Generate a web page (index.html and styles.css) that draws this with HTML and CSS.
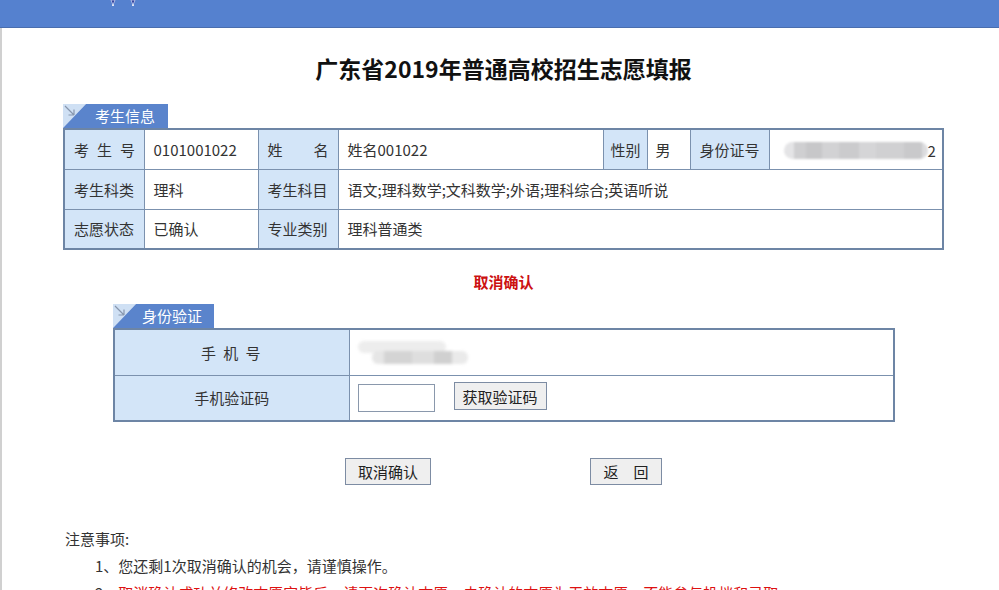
FILE: index.html
```html
<!DOCTYPE html>
<html lang="zh-CN">
<head>
<meta charset="utf-8">
<title>广东省2019年普通高校招生志愿填报</title>
<link rel="stylesheet" href="styles.css">
</head>
<body>
<header class="topbar">
  <svg class="logo-bits" width="34" height="7" viewBox="0 0 34 7">
    <path d="M4 0 L8 0 L6 5 Z" fill="#2a3a9a" stroke="#c8d0f0" stroke-width="0.8"/>
    <circle cx="6" cy="5.2" r="0.9" fill="#ffffff"/>
    <path d="M24 0 L28 0 L26 5 Z" fill="#2a3a9a" stroke="#c8d0f0" stroke-width="0.8"/>
    <circle cx="26" cy="5.2" r="0.9" fill="#ffffff"/>
  </svg>
</header>
<main class="page">
  <div class="content">
    <h1 class="title">广东省2019年普通高校招生志愿填报</h1>

    <div class="tab">
      <svg class="tab-corner" width="28" height="24" viewBox="0 0 28 24">
        <polygon points="0,0 23,0 0,24" fill="#cfe0f4"/>
        <polygon points="23,0 28,0 28,24 0,24" fill="#5a84cc"/>
        <path d="M2 2 L11 11 M11 11 L11 5.5 M11 11 L5.5 11" stroke="#8796ad" stroke-width="1.2" fill="none"/>
      </svg>
      <span class="tab-text tab-text-a">考生信息</span>
    </div>
    <table class="info">
      <colgroup>
        <col class="c1"><col class="c2"><col class="c3"><col class="c4"><col class="c5"><col class="c6"><col class="c7"><col class="c8">
      </colgroup>
      <tr>
        <td class="lbl"><span class="just">考 生 号</span></td>
        <td>0101001022</td>
        <td class="lbl"><span class="just">姓 名</span></td>
        <td>姓名001022</td>
        <td class="lbl lbl-sm">性别</td>
        <td class="val-sm">男</td>
        <td class="lbl">身份证号</td>
        <td class="idcell"><span class="blur-id"></span><span class="id-tail">2</span></td>
      </tr>
      <tr>
        <td class="lbl">考生科类</td>
        <td>理科</td>
        <td class="lbl">考生科目</td>
        <td colspan="5">语文;理科数学;文科数学;外语;理科综合;英语听说</td>
      </tr>
      <tr>
        <td class="lbl">志愿状态</td>
        <td>已确认</td>
        <td class="lbl">专业类别</td>
        <td colspan="5">理科普通类</td>
      </tr>
    </table>

    <p class="action-title">取消确认</p>

    <div class="verify">
      <div class="tab">
        <svg class="tab-corner" width="28" height="24" viewBox="0 0 28 24">
          <polygon points="0,0 23,0 0,24" fill="#cfe0f4"/>
          <polygon points="23,0 28,0 28,24 0,24" fill="#5a84cc"/>
          <path d="M2 2 L11 11 M11 11 L11 5.5 M11 11 L5.5 11" stroke="#8796ad" stroke-width="1.2" fill="none"/>
        </svg>
        <span class="tab-text tab-text-b">身份验证</span>
      </div>
      <table class="auth">
        <colgroup><col class="a1"><col class="a2"></colgroup>
        <tr>
          <td class="lbl center spaced">手 机 号</td>
          <td class="aval">
            <div class="blur-phone"><span class="bp1"></span><span class="bp2"></span></div>
          </td>
        </tr>
        <tr>
          <td class="lbl center">手机验证码</td>
          <td class="aval">
            <div class="code-row">
              <input class="code-input" type="text">
              <button class="btn btn-code" type="button">获取验证码</button>
            </div>
          </td>
        </tr>
      </table>
    </div>

    <div class="actions">
      <button class="btn btn-main" type="button">取消确认</button>
      <button class="btn btn-back" type="button">返　回</button>
    </div>
  </div>

  <section class="notes">
    <p class="notes-head">注意事项:</p>
    <p class="note">1、您还剩1次取消确认的机会，请谨慎操作。</p>
    <p class="note">2、<span class="red">取消确认成功并修改志愿完毕后，请再次确认志愿，未确认的志愿为无效志愿，不能参与投档和录取。</span></p>
  </section>
</main>
</body>
</html>
```
FILE: styles.css
```css
* { box-sizing: border-box; }
html, body { margin: 0; padding: 0; background: #ffffff; }
body {
  font-family: "Noto Sans CJK SC", "Microsoft YaHei", "Noto Sans", sans-serif;
  font-size: 15px;
  color: #333333;
  width: 999px;
  height: 590px;
  overflow: hidden;
}
.topbar {
  height: 28px;
  background: #5581cf;
  border-bottom: 1px solid #4a6eae;
  display: flex;
  align-items: flex-start;
  padding-left: 107px;
}
.logo-bits { display: block; }
.page {
  border-left: 2px solid #d0d0d0;
  min-height: 562px;
}
.content {
  width: 881px;
  margin-left: 61px;
  display: flex;
  flex-direction: column;
}
.title {
  margin: 24px 0 0 0;
  height: 32px;
  line-height: 32px;
  text-align: center;
  font-size: 23px;
  font-weight: bold;
  color: #111111;
}
.tab {
  margin-top: 20px;
  height: 24px;
  display: flex;
  align-items: stretch;
}
.tab-corner { display: block; flex: none; }
.tab-text {
  background: #5a84cc;
  color: #ffffff;
  font-size: 15px;
  line-height: 24px;
  height: 24px;
}
.tab-text-a { padding: 0 13px 0 4px; }
.tab-text-b { padding: 0 12px 0 1px; }

table { border-collapse: collapse; table-layout: fixed; }
td {
  border: 1px solid #7b91ae;
  padding: 0 0 0 9px;
  font-size: 15px;
  color: #333333;
  white-space: nowrap;
}
.info {
  width: 879px;
  border: 2px solid #6d85a5;
}
.info td { height: 40px; }
.c1 { width: 80px; } .c2 { width: 114px; } .c3 { width: 80px; } .c4 { width: 265px; }
.c5 { width: 44px; } .c6 { width: 43px; } .c7 { width: 79px; } .c8 { width: 174px; }
.lbl { background: #d3e5f8; }
.info .lbl { padding-left: 9px; }
.info .lbl-sm { padding-left: 7px; }
.info .val-sm { padding-left: 8px; }
.just {
  display: inline-block;
  width: 61px;
  text-align: justify;
  text-align-last: justify;
}
.idcell { padding-left: 14px; }
.blur-id {
  display: inline-block;
  vertical-align: middle;
  width: 144px;
  height: 17px;
  border-radius: 9px;
  background: linear-gradient(90deg, #e4e4e6 0, #e4e4e6 10px, #cfcfd1 10px, #cfcfd1 22px, #c7c7c9 22px, #c7c7c9 38px, #d2d2d4 38px, #d2d2d4 55px, #cbcbcd 55px, #cbcbcd 75px, #d5d5d7 75px, #d5d5d7 92px, #d0d0d2 92px, #d0d0d2 120px, #c9c9cb 120px, #c9c9cb 138px, #dcdcde 138px);
  filter: blur(1px);
}
.id-tail { vertical-align: middle; margin-left: 0; }

.action-title {
  margin: 21px 0 0 0;
  height: 22px;
  line-height: 22px;
  text-align: center;
  color: #cc1111;
  font-weight: bold;
  font-size: 15px;
}
.verify {
  width: 780px;
  margin-left: 50px;
  display: flex;
  flex-direction: column;
}
.verify .tab { margin-top: 11px; }
.auth {
  width: 780px;
  border: 2px solid #6d85a5;
}
.auth td { height: 46px; }
.a1 { width: 235px; } .a2 { width: 545px; }
.center { text-align: center; padding: 0; }
.spaced { letter-spacing: 2px; }
.aval { padding-left: 8px; }
.blur-phone {
  display: flex;
  flex-direction: column;
  width: 115px;
  filter: blur(1.5px);
}
.bp1 {
  display: block;
  width: 88px;
  height: 12px;
  border-radius: 6px;
  background: #ededed;
}
.bp2 {
  display: block;
  width: 96px;
  height: 13px;
  margin: -2px 0 0 14px;
  border-radius: 6px;
  background: linear-gradient(90deg, #e6e6e6 0, #e6e6e6 12px, #d4d4d4 12px, #d4d4d4 40px, #dedede 40px, #dedede 62px, #d0d0d0 62px, #d0d0d0 80px, #eaeaea 80px);
}
.code-row {
  display: flex;
  align-items: center;
  gap: 19px;
}
.code-input {
  width: 77px;
  height: 28px;
  margin: 0;
  border: 1px solid #8a98ac;
  background: #ffffff;
  padding: 0 4px;
  font-size: 15px;
}
.btn {
  font-family: "Noto Sans CJK SC", "Microsoft YaHei", sans-serif;
  font-size: 15px;
  color: #222222;
  background: #efefef;
  border: 1px solid #7d8ca3;
  border-radius: 0;
  padding: 0;
  margin: 0;
  line-height: 25px;
}
.btn-code { width: 93px; height: 28px; margin-top: -3px; }
.actions {
  margin-top: 36px;
  display: flex;
  justify-content: center;
  gap: 159px;
}
.btn-main { width: 86px; height: 27px; }
.btn-back { width: 72px; height: 27px; }

.notes {
  margin: 40px 0 0 0;
  padding-left: 63px;
}
.notes p {
  margin: 0;
  height: 27px;
  line-height: 27px;
  font-size: 15px;
  color: #333333;
  white-space: nowrap;
}
.notes .note { padding-left: 30px; }
.red { color: #dd1111; }
```
